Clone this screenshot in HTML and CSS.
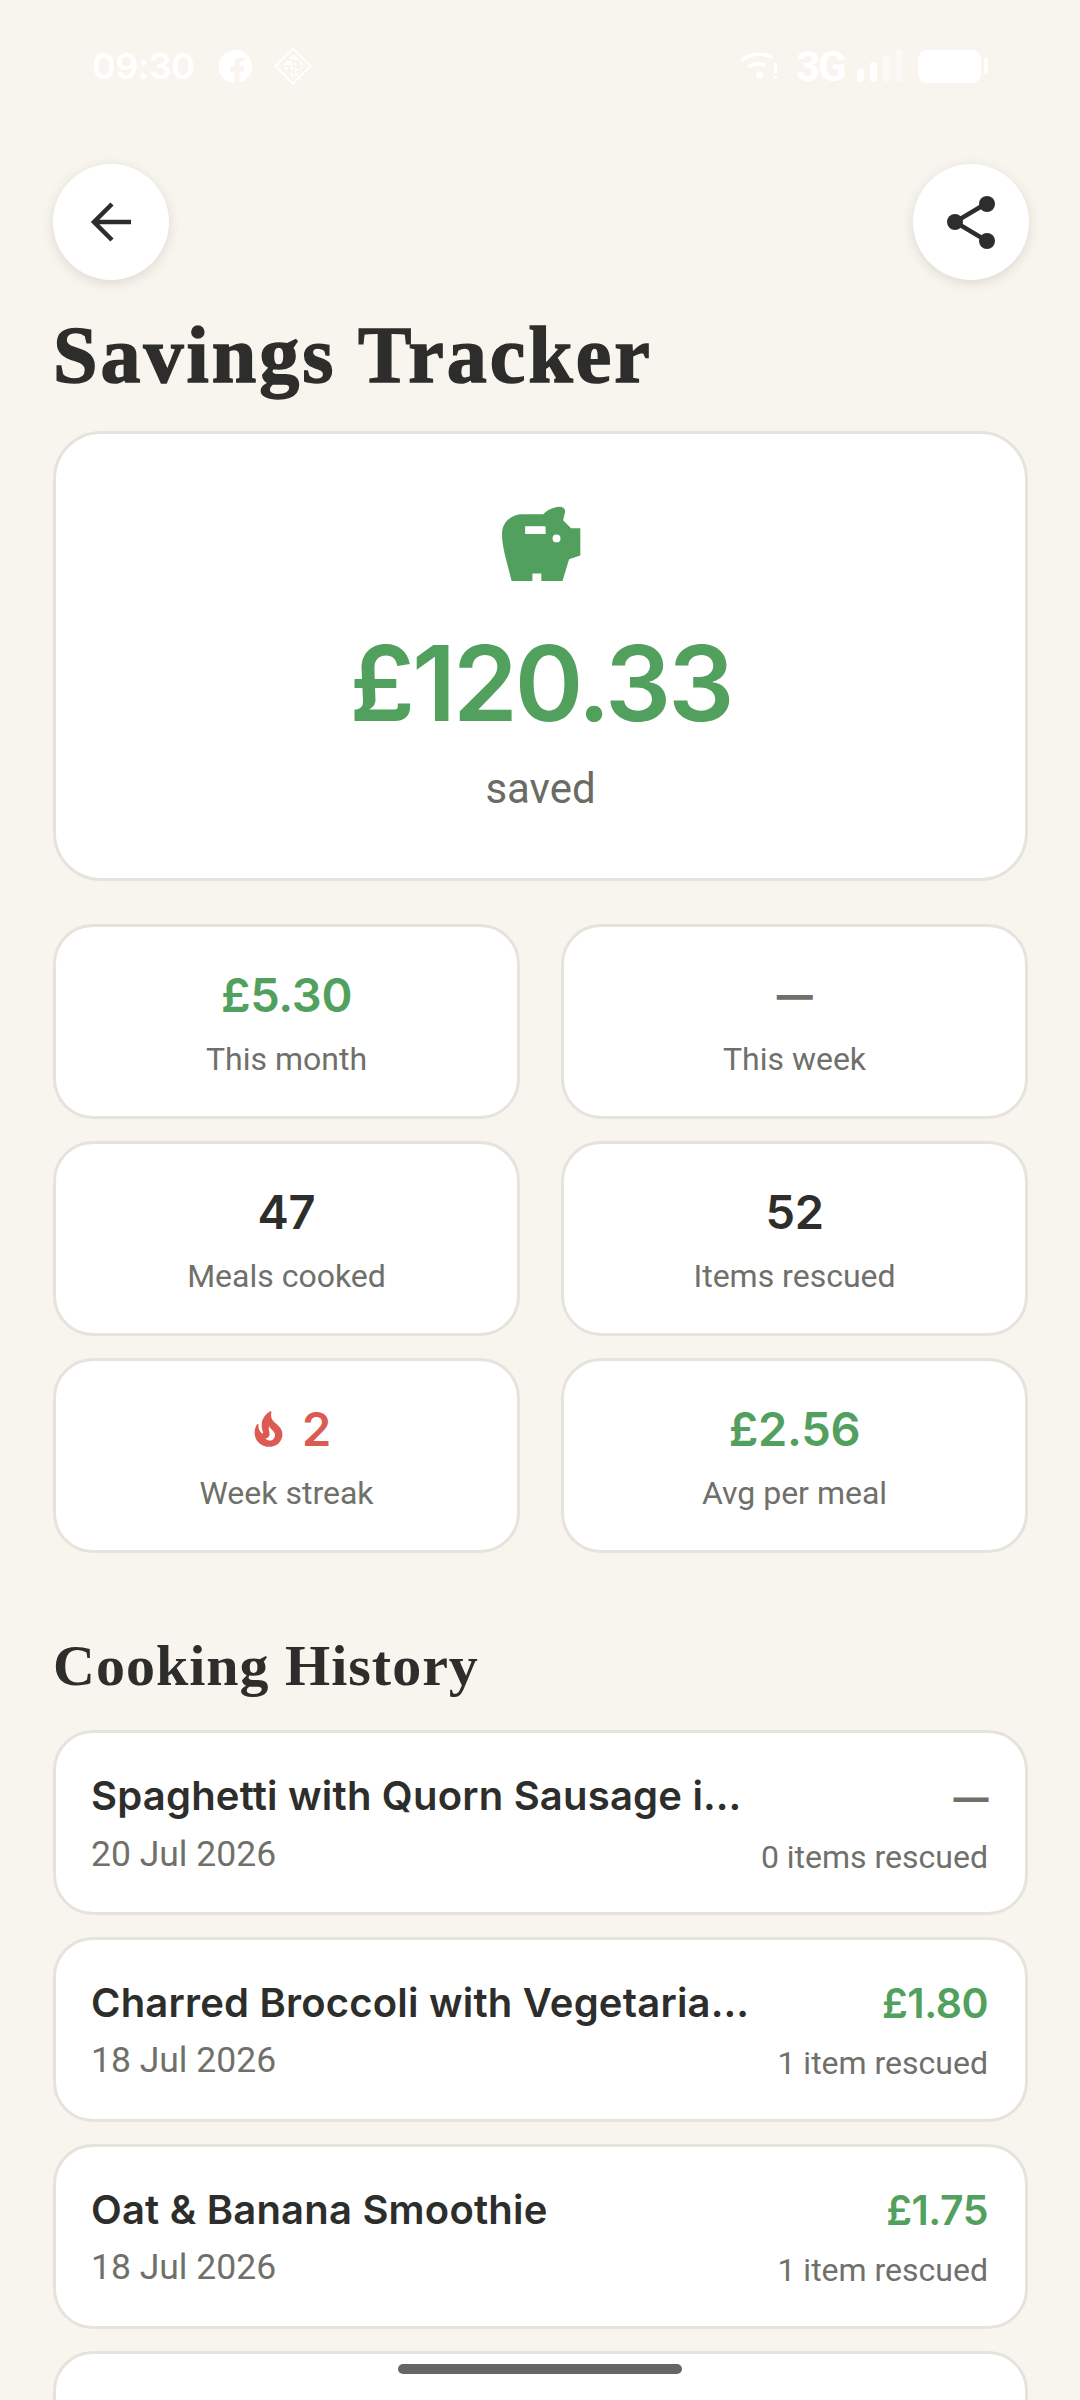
FILE: index.html
```html
<!DOCTYPE html>
<html lang="en">
<head>
  <meta charset="UTF-8">
  <title>Savings Tracker</title>
  <link rel="stylesheet" href="styles.css">
</head>
<body>
  <!-- Status bar -->
  <div class="status">
    <div class="status-side">
      <span class="time">09:30</span>
      <svg class="st-fb" viewBox="0 0 32 32"><path fill-rule="evenodd" d="M16 0a16 16 0 0 1 4 31.500V21h4l.8-5H20v-2.600c0-1.500.7-2.600 2.700-2.600H25V7.500c-1-.2-2.300-.3-3.500-.3-3.800 0-6.300 2.300-6.300 6V16H11v5h4.200v11A16 16 0 0 1 16 0z"/></svg>
      <svg class="st-diamond" viewBox="0 0 38 38"><path d="M19 1.500 36.500 19 19 36.500 1.500 19z" fill="none" stroke="#fff" stroke-width="2" stroke-linejoin="round"/><path d="M19 7v5h-4zM20 13h5l-5-5zM13 14h5v4H9zM20 15l4 3h-4zM26 14l3 4h-3zM9 20h5l-1 4zM16 20h3v5zM21 20l4 4h-4zM27 20h2l-3 4zM19 26v5l-4-5zM21 26h4l-4 4z"/></svg>
    </div>
    <div class="status-side">
      <svg class="st-wifi" viewBox="0 0 38 30"><g fill="none" stroke="#fff" stroke-width="3.600" stroke-linecap="round"><path d="M2 8.500C10 2 23 2 30 6"/><path d="M8.500 15.500c4-3 10-3.500 15-1.500"/></g><circle cx="18.500" cy="24" r="3.600"/><path d="M33 12h3v10h-3zM33 25h3v3h-3z"/></svg>
      <span class="st-net">3G</span>
      <div class="st-bars">
        <i class="bar b1"></i><i class="bar b2"></i><i class="bar b3"></i><i class="bar b4"></i>
      </div>
      <div class="st-batt"><i class="batt-body"></i><i class="batt-nub"></i></div>
    </div>
  </div>

  <main class="page">
    <div class="actions">
      <button class="round-btn">
        <svg viewBox="0 0 44 44" width="44" height="44"><path d="M42 22H5M23 4 5 22l18 18" fill="none" stroke="#2d2e2b" stroke-width="4.500"/></svg>
      </button>
      <button class="round-btn">
        <svg viewBox="0 0 48 56" width="48" height="56"><path d="M40 9 8 28l32 19" fill="none" stroke="#2d2e2b" stroke-width="4.400"/><circle cx="40" cy="10" r="8"/><circle cx="8" cy="28" r="8"/><circle cx="40" cy="47" r="8"/></svg>
      </button>
    </div>

    <h1>Savings Tracker</h1>

    <!-- Total -->
    <section class="card hero">
      <svg class="piggy" viewBox="600 105 242 230"><path fill-rule="evenodd" d="M603 190c0-35 27-60 62-60h63c13-14 32-23 50-23 12 0 18 8 15 20l-5 21 24 24h28v83l-34 11-20 66h-64v-23h-27v23h-63c-12-50-29-100-29-142zM673 166v24h62v-24zM768 191a12 12 0 1 0 0 24 12 12 0 0 0 0-24z"/></svg>
      <div class="hero-value">£120.33</div>
      <div class="hero-label">saved</div>
    </section>

    <!-- Stats -->
    <section class="stats">
      <div class="card stat"><div class="stat-value green">£5.30</div><div class="stat-label">This month</div></div>
      <div class="card stat"><div class="stat-value muted"><span class="dash">—</span></div><div class="stat-label">This week</div></div>
      <div class="card stat"><div class="stat-value">47</div><div class="stat-label">Meals cooked</div></div>
      <div class="card stat"><div class="stat-value">52</div><div class="stat-label">Items rescued</div></div>
      <div class="card stat">
        <div class="stat-value red streak">
          <svg class="flame" viewBox="4 1.400 16 20.700"><path d="M19.480 12.350c-1.570-4.080-7.160-4.300-5.810-10.230.1-.44-.37-.78-.75-.55C9.290 3.710 6.680 8 8.870 13.620c.18.46-.36.89-.75.59-1.810-1.370-2-3.340-1.840-4.750.06-.52-.62-.77-.91-.34C4.690 10.160 4 11.840 4 14.370c.38 5.600 5.110 7.320 6.810 7.540 2.430.31 5.060-.14 6.950-1.870 2.080-1.930 2.840-5.010 1.720-7.690zm-9.280 5.030c1.440-.35 2.180-1.390 2.380-2.310.33-1.430-.96-2.830-.09-5.090.33 1.870 3.270 3.040 3.270 5.080.08 2.530-2.660 4.700-5.560 2.320z"/></svg>
          2
        </div>
        <div class="stat-label">Week streak</div>
      </div>
      <div class="card stat"><div class="stat-value green">£2.56</div><div class="stat-label">Avg per meal</div></div>
    </section>

    <h2>Cooking History</h2>

    <!-- History -->
    <section class="history">
      <div class="card item">
        <div class="item-top"><span class="item-name">Spaghetti with Quorn Sausage i…</span><span class="item-price muted"><span class="dash small">—</span></span></div>
        <div class="item-bottom"><span class="item-date">20 Jul 2026</span><span class="item-count">0 items rescued</span></div>
      </div>
      <div class="card item">
        <div class="item-top"><span class="item-name">Charred Broccoli with Vegetaria…</span><span class="item-price green">£1.80</span></div>
        <div class="item-bottom"><span class="item-date">18 Jul 2026</span><span class="item-count">1 item rescued</span></div>
      </div>
      <div class="card item">
        <div class="item-top"><span class="item-name">Oat &amp; Banana Smoothie</span><span class="item-price green">£1.75</span></div>
        <div class="item-bottom"><span class="item-date">18 Jul 2026</span><span class="item-count">1 item rescued</span></div>
      </div>
      <div class="card item"></div>
    </section>
  </main>

  <div class="home-bar"></div>
</body>
</html>
```

FILE: styles.css
```css
* { box-sizing: border-box; }
html, body { margin: 0; height: 2400px; overflow: hidden; }
body {
  background: #f8f5ee;
  color: #2d2e2b;
  font-family: Roboto, sans-serif;
  position: relative;
}

/* status bar */
.status {
  display: flex;
  justify-content: space-between;
  align-items: center;
  height: 34px;
  margin-top: 49px;
  padding: 0 92px;
  color: #fff;
  fill: #fff;
}
.status-side { display: flex; align-items: center; }
.time { font: 600 36px Inter, sans-serif; width: 102px; letter-spacing: -0.5px; }
.st-fb { width: 33px; height: 33px; margin-left: 25px; }
.st-diamond { width: 38px; height: 38px; margin-left: 22px; }
.st-wifi { width: 38px; height: 30px; }
.st-net { font: 700 42px Roboto, sans-serif; letter-spacing: -2px; margin-left: 17px; width: 46px; }
.st-bars { display: flex; align-items: flex-end; gap: 6px; height: 32px; margin-left: 15px; }
.bar { width: 7px; background: #fff; border-radius: 3px; display: block; }
.b1 { height: 13px; }
.b2 { height: 20px; }
.b3 { height: 26px; opacity: .45; }
.b4 { height: 32px; opacity: .45; }
.st-batt { display: flex; align-items: center; gap: 3px; margin-left: 15px; }
.batt-body { display: block; width: 63px; height: 33px; background: #fff; border-radius: 9px; }
.batt-nub { display: block; width: 4px; height: 16px; background: #fff; border-radius: 2px; opacity: .8; }

/* page, clipped at the bottom of the screen like a scrolled list */
.page { padding: 0 52px 0 53px; height: 2317px; overflow: hidden; }
.actions { display: flex; justify-content: space-between; margin: 81px -1px 0 0; }
.round-btn {
  width: 116px;
  height: 116px;
  border: 0;
  padding: 0;
  border-radius: 50%;
  background: #fff;
  box-shadow: 0 3px 12px rgba(60, 55, 40, .14);
  display: flex;
  align-items: center;
  justify-content: center;
  fill: #2d2e2b;
}

h1 {
  font: 700 80px/92px "Liberation Serif", serif;
  letter-spacing: 3px;
  -webkit-text-stroke: 1.500px #2d2e2b;
  margin: 29px 0 0;
  height: 122px;
}
h2 {
  font: 700 58px/70px "Liberation Serif", serif;
  letter-spacing: 1px;
  margin: 78px 0 0;
}

.card {
  background: #fff;
  border: 3px solid #e5e3dc;
  border-radius: 40px;
}
.green { color: #52a05e; }
.red { color: #dc5a52; fill: #dc5a52; }
.muted { color: #70706b; }
.dash { font-size: 36px; font-weight: 800; }
.dash.small { font-size: 35px; }

/* total card */
.hero {
  height: 450px;
  border-radius: 48px;
  display: flex;
  flex-direction: column;
  align-items: center;
  padding-top: 72px;
}
.piggy { width: 80px; height: 76px; fill: #52a05e; display: block; }
.hero-value {
  font: 600 104px/120px Inter, sans-serif;
  letter-spacing: -3px;
  color: #52a05e;
  margin-top: 41px;
}
.hero-label { font-size: 42px; line-height: 48px; color: #6b6b66; margin-top: 22px; }

/* stats */
.stats {
  display: grid;
  grid-template-columns: 1fr 1fr;
  gap: 22px 41px;
  margin-top: 43px;
}
.stat {
  height: 195px;
  display: flex;
  flex-direction: column;
  align-items: center;
  padding-top: 40px;
  gap: 16px;
}
.stat-value {
  font: 600 47px/56px Inter, sans-serif;
  letter-spacing: -0.300px;
  display: flex;
  align-items: center;
  gap: 19px;
}
.streak { padding-left: 12px; }
.flame { width: 29px; height: 36px; display: block; }
.stat-label { font-size: 32px; line-height: 40px; color: #70706b; }

/* history */
.history { display: flex; flex-direction: column; gap: 22px; margin-top: 29px; }
.item {
  height: 185px;
  flex: none;
  padding: 0 37px 0 35px;
  display: flex;
  flex-direction: column;
  justify-content: center;
  gap: 10px;
}
.item-top, .item-bottom {
  display: flex;
  justify-content: space-between;
  align-items: center;
  white-space: nowrap;
}
.item-name { font: 600 40px/50px Inter, sans-serif; letter-spacing: 0.200px; }
.item-price { font: 600 41px/50px Inter, sans-serif; letter-spacing: -0.500px; }
.item-bottom { color: #70706b; line-height: 44px; }
.item-date { font-size: 35.500px; }
.item-count { font-size: 32px; position: relative; top: 3px; }

.home-bar {
  position: absolute;
  left: 398px;
  top: 2364px;
  width: 284px;
  height: 10px;
  border-radius: 5px;
  background: #666;
}
```
